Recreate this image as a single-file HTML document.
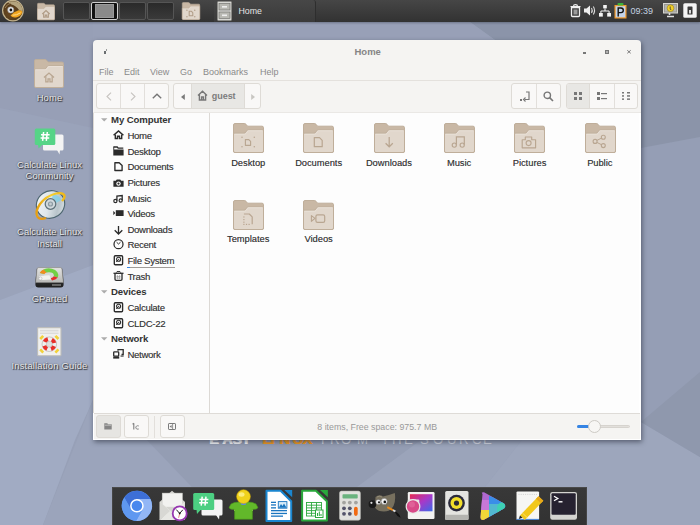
<!DOCTYPE html><html><head><meta charset="utf-8"><style>
*{margin:0;padding:0;box-sizing:border-box}
html,body{width:700px;height:525px;overflow:hidden}
body{position:relative;font-family:"Liberation Sans",sans-serif;background:#98a1b7}
.a{position:absolute}
svg{position:absolute;overflow:visible}
.t{position:absolute;white-space:nowrap;line-height:1}
.dl{position:absolute;width:100px;text-align:center;font-size:9.4px;line-height:11.5px;color:#ececec;text-shadow:1px 1px 1px rgba(0,0,0,.75),0 0 1.5px rgba(0,0,0,.6)}
.ws{position:absolute;top:2px;width:27px;height:18px;border:1px solid #555;border-radius:2px;background:linear-gradient(#2a2a2a,#3a3a3a)}
.sb{position:absolute;left:127px;font-size:9px;color:#4a4a4a;white-space:nowrap;line-height:1}
.sh{position:absolute;left:111px;font-size:9.6px;font-weight:bold;color:#3a3a3a;white-space:nowrap;line-height:1}
.lb{position:absolute;width:80px;text-align:center;font-size:9.2px;color:#3a3a3a;line-height:1;letter-spacing:.05px;text-shadow:.25px 0 0 rgba(58,58,58,.6)}
.tb{position:absolute;border:1px solid #dedbd6;border-radius:3px;background:#f9f8f7}
</style></head><body>
<svg style="left:0;top:0" width="700" height="525">
<rect width="700" height="525" fill="#97a0b7"/>
<polygon points="0,22 93,22 93,128 0,108" fill="#979fb6"/>
<polygon points="0,108 93,128 93,265 0,300" fill="#9aa3ba"/>
<polygon points="0,300 93,265 93,400 75,440 43,525 0,525" fill="#a1abc3"/>
<polygon points="93,400 147,440 192,487 112,487 112,525 43,525" fill="#9ba4bb"/>
<polygon points="147,440 421,440 357,487 192,487" fill="#949db3"/>
<polygon points="421,440 522,440 485,487 357,487" fill="#9ba4ba"/>
<polygon points="522,440 641,440 641,422 700,457 700,525 587,525 587,487 485,487" fill="#9da6bc"/>
<polygon points="641,148 700,137 700,457 641,422" fill="#959eb5"/>
<polygon points="641,422 700,372 700,457" fill="#8f98ad"/>
<polygon points="470,22 700,22 700,137 641,148 641,40 495,40" fill="#8b94a9"/>
<polygon points="93,22 470,22 495,40 93,40" fill="#98a0b7"/>
</svg>
<div class="t" style="left:209.3px;top:434px;font-size:12px;font-weight:bold;color:#f6f7f9;text-shadow:.6px 0 0 #f6f7f9;transform:scaleX(1.2);transform-origin:0 0">E</div>
<div class="t" style="left:222px;top:434px;font-size:12px;font-weight:bold;color:#f6f7f9;text-shadow:.6px 0 0 #f6f7f9;transform:scaleX(1.2);transform-origin:0 0">A</div>
<div class="t" style="left:232.4px;top:434px;font-size:12px;font-weight:bold;color:#f6f7f9;text-shadow:.6px 0 0 #f6f7f9;transform:scaleX(1.2);transform-origin:0 0">S</div>
<div class="t" style="left:240.5px;top:434px;font-size:12px;font-weight:bold;color:#f6f7f9;text-shadow:.6px 0 0 #f6f7f9;transform:scaleX(1.2);transform-origin:0 0">Y</div>
<div class="t" style="left:261.6px;top:434px;font-size:12px;font-weight:bold;color:#f39a1e;text-shadow:.6px 0 0 #f39a1e;transform:scaleX(1.25);transform-origin:0 0">L</div>
<div class="t" style="left:270px;top:434px;font-size:12px;font-weight:bold;color:#f39a1e;text-shadow:.6px 0 0 #f39a1e;transform:scaleX(1.25);transform-origin:0 0">I</div>
<div class="t" style="left:279px;top:434px;font-size:12px;font-weight:bold;color:#f39a1e;text-shadow:.6px 0 0 #f39a1e;transform:scaleX(1.25);transform-origin:0 0">N</div>
<div class="t" style="left:292px;top:434px;font-size:12px;font-weight:bold;color:#f39a1e;text-shadow:.6px 0 0 #f39a1e;transform:scaleX(1.25);transform-origin:0 0">U</div>
<div class="t" style="left:302px;top:434px;font-size:12px;font-weight:bold;color:#f39a1e;text-shadow:.6px 0 0 #f39a1e;transform:scaleX(1.25);transform-origin:0 0">X</div>
<div class="t" style="left:320.7px;top:434px;font-size:12px;color:#dfe2ea;opacity:.85;transform:scaleX(1.1);transform-origin:0 0">F</div>
<div class="t" style="left:330.4px;top:434px;font-size:12px;color:#dfe2ea;opacity:.85;transform:scaleX(1.1);transform-origin:0 0">R</div>
<div class="t" style="left:340.7px;top:434px;font-size:12px;color:#dfe2ea;opacity:.85;transform:scaleX(1.1);transform-origin:0 0">O</div>
<div class="t" style="left:357.4px;top:434px;font-size:12px;color:#dfe2ea;opacity:.85;transform:scaleX(1.1);transform-origin:0 0">M</div>
<div class="t" style="left:380.5px;top:434px;font-size:12px;color:#dfe2ea;opacity:.85;transform:scaleX(1.1);transform-origin:0 0">T</div>
<div class="t" style="left:392px;top:434px;font-size:12px;color:#dfe2ea;opacity:.85;transform:scaleX(1.1);transform-origin:0 0">H</div>
<div class="t" style="left:403.7px;top:434px;font-size:12px;color:#dfe2ea;opacity:.85;transform:scaleX(1.1);transform-origin:0 0">E</div>
<div class="t" style="left:420.4px;top:434px;font-size:12px;color:#dfe2ea;opacity:.85;transform:scaleX(1.1);transform-origin:0 0">S</div>
<div class="t" style="left:433px;top:434px;font-size:12px;color:#dfe2ea;opacity:.85;transform:scaleX(1.1);transform-origin:0 0">O</div>
<div class="t" style="left:447.4px;top:434px;font-size:12px;color:#dfe2ea;opacity:.85;transform:scaleX(1.1);transform-origin:0 0">U</div>
<div class="t" style="left:459px;top:434px;font-size:12px;color:#dfe2ea;opacity:.85;transform:scaleX(1.1);transform-origin:0 0">R</div>
<div class="t" style="left:471.8px;top:434px;font-size:12px;color:#dfe2ea;opacity:.85;transform:scaleX(1.1);transform-origin:0 0">C</div>
<div class="t" style="left:483.4px;top:434px;font-size:12px;color:#dfe2ea;opacity:.85;transform:scaleX(1.1);transform-origin:0 0">E</div>
<div class="a" style="left:0;top:0;width:700px;height:22px;background:linear-gradient(#464646,#323232);box-shadow:0 1px 2px rgba(30,35,50,.35)"></div>
<svg style="left:2px;top:0" width="22" height="22" viewBox="0 0 22 22">
<defs><radialGradient id="lg1" cx=".35" cy=".6" r=".7"><stop offset="0" stop-color="#6a4a22"/><stop offset="1" stop-color="#4a3418"/></radialGradient></defs>
<circle cx="10.9" cy="10.6" r="10.9" fill="#c4b48e"/>
<circle cx="10.9" cy="10.6" r="9.7" fill="url(#lg1)"/>
<path d="M6 2.2 Q12 0 17 3 Q20.5 6 20.6 11.5 L17 10 Q14 5.5 9.5 4.5Z" fill="#b4a47e"/>
<path d="M3 8 Q5 4 9 3" stroke="#9a8058" stroke-width="1" fill="none"/>
<path d="M8.5 15.5 Q12 11.5 16.5 10.3 Q19.8 9.8 20.3 11.8 Q20 15.5 15 17.2 Q10.5 18.3 8.5 15.5Z" fill="#f2a41c"/>
<path d="M10.5 15.2 Q14.5 15.5 18.5 12.8" stroke="#ffe4a0" stroke-width=".9" fill="none"/>
<circle cx="8.7" cy="9.9" r="3.1" fill="#f2f2f2" stroke="#8a8a8a" stroke-width=".6"/>
<circle cx="8.9" cy="10" r="1.4" fill="#111"/>
</svg>
<svg style="left:37px;top:3px" width="18" height="17" viewBox="0 0 31 30">
<path d="M.5 2 Q.5 .5 2 .5 L11.2 .5 Q12.3 .5 13 1.3 L14.6 3.2 L29 3.2 Q30.5 3.2 30.5 4.7 L30.5 28 Q30.5 29.5 29 29.5 L2 29.5 Q.5 29.5 .5 28Z" fill="#c9b8a5" stroke="#bfae9a" stroke-width="1"/>
<path d="M.5 10.2 L11.2 10.2 Q12.1 10.2 12.7 9.3 L13.8 7.6 Q14.3 6.8 15.2 6.8 L30.5 6.8 L30.5 28 Q30.5 29.5 29 29.5 L2 29.5 Q.5 29.5 .5 28Z" fill="#e1d7cc" stroke="#bfae9a" stroke-width="1"/>
<path d="M1.5 11.2 L11.4 11.2 Q12.6 11.2 13.3 10.2 L14.4 8.5 Q14.8 7.8 15.6 7.8 L29.5 7.8" stroke="#ebe3da" stroke-width=".8" fill="none"/>
<path d="M9 19.5 L15.5 13.5 L22 19.5" stroke="#b09c86" stroke-width="2.2" fill="none"/><path d="M11.3 18 V25 H14.2 V21.5 H16.8 V25 H19.7 V18" stroke="#b09c86" stroke-width="2" fill="none"/>
</svg>
<div class="ws" style="left:63px"></div>
<div class="ws" style="left:91px;border:1px solid #cfcfcf;background:#111"><div class="a" style="left:3px;top:1px;width:19px;height:14px;background:#8a8a8a;border:1px solid #9a9a9a"></div></div>
<div class="ws" style="left:119px"></div>
<div class="ws" style="left:147px"></div>
<svg style="left:182px;top:2px" width="18" height="18" viewBox="0 0 31 30">
<path d="M.5 2 Q.5 .5 2 .5 L11.2 .5 Q12.3 .5 13 1.3 L14.6 3.2 L29 3.2 Q30.5 3.2 30.5 4.7 L30.5 28 Q30.5 29.5 29 29.5 L2 29.5 Q.5 29.5 .5 28Z" fill="#c9b8a5" stroke="#bfae9a" stroke-width="1"/>
<path d="M.5 10.2 L11.2 10.2 Q12.1 10.2 12.7 9.3 L13.8 7.6 Q14.3 6.8 15.2 6.8 L30.5 6.8 L30.5 28 Q30.5 29.5 29 29.5 L2 29.5 Q.5 29.5 .5 28Z" fill="#e1d7cc" stroke="#bfae9a" stroke-width="1"/>
<path d="M1.5 11.2 L11.4 11.2 Q12.6 11.2 13.3 10.2 L14.4 8.5 Q14.8 7.8 15.6 7.8 L29.5 7.8" stroke="#ebe3da" stroke-width=".8" fill="none"/>
<path d="M12.4 15.6 H16.2 L18.6 18 V23.3 H12.4Z" stroke="#b09c86" stroke-width="1.8" fill="none"/><g fill="#b09c86"><circle cx="8.5" cy="13.8" r="1.2"/><circle cx="22" cy="13.8" r="1.2"/><circle cx="8.5" cy="25" r="1.2"/><circle cx="22" cy="25" r="1.2"/></g>
</svg>
<div class="a" style="left:214px;top:0;width:102px;height:22px;background:linear-gradient(#474747,#3a3a3a);border-radius:0 3px 0 0;border-right:1px solid #2e2e2e"></div>
<svg style="left:217px;top:1px" width="15" height="20" viewBox="0 0 15 20">
<rect x=".5" y=".5" width="14" height="19" rx="1" fill="#d8d8d4" stroke="#8c8c88"/>
<rect x="2" y="2.5" width="11" height="6.5" fill="#b8b8b2" stroke="#6a6a66" stroke-width=".6"/>
<rect x="2" y="11" width="11" height="6.5" fill="#b8b8b2" stroke="#6a6a66" stroke-width=".6"/>
<rect x="5" y="5" width="5" height="1.6" fill="#eee"/><rect x="5" y="13.5" width="5" height="1.6" fill="#eee"/>
</svg>
<div class="t" style="left:238.5px;top:7px;font-size:8.8px;color:#e4e4e4;">Home</div>
<svg style="left:570px;top:4px" width="11" height="13" viewBox="0 0 11 13">
<path d="M1.5 3.5 H9.5 V11.5 Q9.5 12.5 8.5 12.5 H2.5 Q1.5 12.5 1.5 11.5Z" fill="none" stroke="#f0f0f0" stroke-width="1.3"/>
<rect x="3.5" y="5.5" width="4" height="5" fill="#9a9a9a"/>
<path d="M.5 2.5 H10.5 M3.5 2.3 Q3.5 .7 5.5 .7 Q7.5 .7 7.5 2.3" stroke="#f0f0f0" stroke-width="1.2" fill="none"/>
</svg>
<svg style="left:584px;top:5px" width="12" height="11" viewBox="0 0 12 11">
<path d="M0 3.5 H2.5 L6 .5 V10.5 L2.5 7.5 H0Z" fill="#eee"/>
<path d="M7.5 3 Q9 5.5 7.5 8 M9.3 1.5 Q11.8 5.5 9.3 9.5" stroke="#ddd" stroke-width="1.1" fill="none"/>
</svg>
<svg style="left:599px;top:5px" width="12" height="12" viewBox="0 0 12 12">
<rect x="4.2" y="0" width="3.6" height="3.4" fill="#f4f4f4"/>
<rect x="0" y="8" width="3.8" height="3.6" fill="#f4f4f4"/><rect x="8.2" y="8" width="3.8" height="3.6" fill="#f4f4f4"/>
<path d="M6 3.4 V6 M1.9 8 V6 H10.1 V8" stroke="#f4f4f4" stroke-width="1" fill="none"/>
</svg>
<svg style="left:614px;top:3px" width="13" height="16" viewBox="0 0 13 16">
<rect x=".5" y="2" width="12" height="13.5" fill="#f39a2b"/>
<rect x="1.7" y="3.2" width="9.6" height="11.1" fill="#c4d4ea"/>
<rect x="3.5" y="0" width="6" height="2.6" rx="1" fill="#3cb43c"/>
<path d="M4.2 13.5 V5 H7 Q9.3 5 9.3 7.3 Q9.3 9.6 7 9.6 H4.2" stroke="#111" stroke-width="1.4" fill="none"/>
</svg>
<div class="t" style="left:630.5px;top:7px;font-size:9px;color:#c4d2e0;">09:39</div>
<svg style="left:663px;top:3px" width="15" height="15" viewBox="0 0 15 15">
<rect x=".5" y=".5" width="14" height="9.5" fill="#9a9a96" stroke="#d6d6d0"/>
<rect x="2" y="2" width="11" height="6.5" fill="#b5b5b0"/>
<circle cx="7.5" cy="5.2" r="3.4" fill="#f2d02a" stroke="#6a5a00" stroke-width=".4"/>
<path d="M7.2 3.5 V6 L8.2 7" stroke="#333" stroke-width=".8" fill="none"/>
<path d="M6.5 10 V12 M4 13.5 H11" stroke="#e0e0e0" stroke-width="1.6"/>
</svg>
<svg style="left:683px;top:3px" width="14" height="15" viewBox="0 0 14 15">
<rect x=".3" y=".3" width="13.4" height="14.4" rx="1.5" fill="#f4f4f4"/>
<rect x="4.5" y="3.5" width="5" height="8" rx=".6" fill="#3a3a3a"/>
<rect x="6" y="7" width="2" height="3.5" fill="#ddd"/>
</svg>
<svg style="left:34px;top:59px" width="30" height="29" viewBox="0 0 31 30">
<path d="M.5 2 Q.5 .5 2 .5 L11.2 .5 Q12.3 .5 13 1.3 L14.6 3.2 L29 3.2 Q30.5 3.2 30.5 4.7 L30.5 28 Q30.5 29.5 29 29.5 L2 29.5 Q.5 29.5 .5 28Z" fill="#c9b8a5" stroke="#bfae9a" stroke-width="1"/>
<path d="M.5 10.2 L11.2 10.2 Q12.1 10.2 12.7 9.3 L13.8 7.6 Q14.3 6.8 15.2 6.8 L30.5 6.8 L30.5 28 Q30.5 29.5 29 29.5 L2 29.5 Q.5 29.5 .5 28Z" fill="#e1d7cc" stroke="#bfae9a" stroke-width="1"/>
<path d="M1.5 11.2 L11.4 11.2 Q12.6 11.2 13.3 10.2 L14.4 8.5 Q14.8 7.8 15.6 7.8 L29.5 7.8" stroke="#ebe3da" stroke-width=".8" fill="none"/>
<path d="M10.3 19.2 L15.5 14.6 L20.7 19.2" stroke="#b9a691" stroke-width="1.4" fill="none"/><path d="M12.2 17.8 V23.6 H14.5 V20.6 H16.5 V23.6 H18.8 V17.8" stroke="#b9a691" stroke-width="1.3" fill="none"/>
</svg>
<div class="dl" style="left:-0.5px;top:91.7px;letter-spacing:0.15px">Home</div>
<svg style="left:34px;top:128px" width="30" height="28" viewBox="0 0 30 28">
<rect x="9" y="6.5" width="20.5" height="16" rx="1.5" fill="#f4f4f4"/>
<path d="M23 22 L25.5 26.5 L26 22Z" fill="#f4f4f4"/>
<rect x=".8" y=".4" width="20.5" height="16.5" rx="1.5" fill="#56d487"/>
<path d="M4 16.5 L4.6 20.6 L8.5 16.5Z" fill="#56d487"/>
<path d="M9.6 4 L8.6 12.8 M13.3 4 L12.3 12.8 M7 6.8 H15.6 M6.6 10 H15.2" stroke="#fff" stroke-width="1.5"/>
</svg>
<div class="dl" style="left:-0.5px;top:158.7px;letter-spacing:0.05px">Calculate Linux<br>Community</div>
<svg style="left:34px;top:190px" width="32" height="32" viewBox="0 0 32 32">
<defs><linearGradient id="cdg" x1="0" y1="0" x2="1" y2="1"><stop offset="0" stop-color="#f6f8fa"/><stop offset=".45" stop-color="#dfe6ea"/><stop offset=".7" stop-color="#b8c4ca"/><stop offset="1" stop-color="#eef2f4"/></linearGradient>
<linearGradient id="cdb" x1="0" y1="0" x2="1" y2="0"><stop offset="0" stop-color="#e8a010"/><stop offset=".5" stop-color="#f6d030"/><stop offset="1" stop-color="#f0b818"/></linearGradient></defs>
<ellipse cx="16.5" cy="14.5" rx="14.5" ry="13.5" transform="rotate(-35 16.5 14.5)" fill="url(#cdg)" stroke="#4d6670" stroke-width="1.1"/>
<path d="M19 4 Q25 5 27.5 10 L22 13 Q21 9 18 8Z" fill="#7ed0e8" opacity=".75"/>
<circle cx="16.5" cy="14" r="5.3" fill="#d0d8dc" stroke="#5d7078" stroke-width="1.2"/>
<circle cx="16.5" cy="14" r="2.6" fill="#8a9aa2"/><circle cx="16.5" cy="14" r="1.4" fill="#c4ccd0"/>
<path d="M3.5 27 Q.5 22 6 14 Q12 6 22 3.5 Q29 2 30.5 5.5 Q31 8 28 11" stroke="url(#cdb)" stroke-width="2.3" fill="none"/>
<path d="M3.5 27 Q6 30 12 28" stroke="#e89a10" stroke-width="2.3" fill="none"/>
</svg>
<div class="dl" style="left:-0.5px;top:226.2px;letter-spacing:0.05px">Calculate Linux<br>Install</div>
<svg style="left:35px;top:267px" width="29" height="21" viewBox="0 0 29 21">
<defs><linearGradient id="gpb" x1="0" y1="0" x2="0" y2="1"><stop offset="0" stop-color="#4a4a4a"/><stop offset="1" stop-color="#1e1e1e"/></linearGradient>
<linearGradient id="gpt" x1="0" y1="0" x2="0" y2="1"><stop offset="0" stop-color="#e4e4e2"/><stop offset="1" stop-color="#b8b8b6"/></linearGradient></defs>
<path d="M3.5 .5 H25.5 Q27 .5 27.3 2 L28.6 14 V17.5 Q28.6 20.5 25.6 20.5 H3.4 Q.4 20.5 .4 17.5 V14 L1.7 2 Q2 .5 3.5 .5Z" fill="url(#gpb)"/>
<path d="M3.7 .6 H25.3 Q26.6 .6 26.9 1.9 L28.3 15.5 H.7 L2.1 1.9 Q2.4 .6 3.7 .6Z" fill="url(#gpt)" stroke="#8a8a88" stroke-width=".5"/>
<path d="M14 8 L4.8 6 A9.5 7 0 0 1 22.8 10.6Z" fill="#72d046"/>
<path d="M14 8 L4.8 6 A9.5 7 0 0 1 8.5 2.6Z" fill="#f28a1e"/>
<path d="M14 8 L22.8 10.6 A9.5 7 0 0 1 17 13.6Z" fill="#e42e2e"/>
<ellipse cx="14" cy="8.3" rx="4.8" ry="3" fill="#d8d8d6"/>
<path d="M4 9 L14.5 8.2 L16 12.5 L6.5 13Z" fill="#f2f2f0"/>
<circle cx="5.4" cy="11.5" r="1.6" fill="#f8f8f8" stroke="#999" stroke-width=".4"/>
<rect x="17" y="17.2" width="9" height="1.6" fill="#777"/>
</svg>
<div class="dl" style="left:-0.5px;top:293.2px;letter-spacing:0.1px">GParted</div>
<svg style="left:37px;top:327px" width="25" height="30" viewBox="0 0 25 30">
<rect x=".6" y=".6" width="23.4" height="28.2" rx="1" fill="#f0f0ee" stroke="#bdbdbb" stroke-width="1.1"/>
<rect x="3" y="2.8" width="18.5" height="1.6" fill="#dcdcda"/><rect x="3" y="5.6" width="18.5" height="1.4" fill="#dcdcda"/>
<circle cx="12.3" cy="17.2" r="7.3" fill="#f0f0ee" stroke="#a0a09e" stroke-width=".5"/>
<circle cx="12.3" cy="17.2" r="5.1" fill="none" stroke="#e8302a" stroke-width="4.2" stroke-dasharray="4.0 4.0" stroke-dashoffset="6"/>
<circle cx="12.3" cy="17.2" r="3" fill="#e0e0de" stroke="#b0b0ae" stroke-width=".5"/>
<path d="M3.2 12 L6.2 8.8 M21.4 12 L18.4 8.8 M3.2 22.4 L6.2 25.6 M21.4 22.4 L18.4 25.6" stroke="#f2d23a" stroke-width="2.6"/>
</svg>
<div class="dl" style="left:-0.5px;top:360.2px;letter-spacing:0.2px">Installation Guide</div>
<div class="a" style="left:93px;top:40px;width:548px;height:400px;background:#f5f4f2;border-radius:4px 4px 0 0;box-shadow:1px 2px 5px rgba(40,45,60,.6)"></div>
<div class="t" style="left:354.5px;top:47px;font-size:9.5px;color:#858585;font-weight:bold;">Home</div>
<div class="a" style="left:104px;top:51px;width:2px;height:3px;background:#6a6e70"></div><div class="a" style="left:106px;top:49px;width:1px;height:2px;background:#9a9c9c"></div>
<div class="a" style="left:583px;top:52px;width:2.5px;height:2px;background:#777"></div>
<div class="a" style="left:605px;top:50.4px;width:3.5px;height:3.5px;border:1px solid #777;background:#b0b0b0"></div>
<svg style="left:627.3px;top:50.4px" width="4" height="3.6" viewBox="0 0 4 3.6"><path d="M.3 .3 L3.7 3.3 M3.7 .3 L.3 3.3" stroke="#777" stroke-width="1"/></svg>
<div class="t" style="left:99px;top:68px;font-size:9px;color:#8a8a8a">File</div>
<div class="t" style="left:124px;top:68px;font-size:9px;color:#8a8a8a">Edit</div>
<div class="t" style="left:150px;top:68px;font-size:9px;color:#8a8a8a">View</div>
<div class="t" style="left:180px;top:68px;font-size:9px;color:#8a8a8a">Go</div>
<div class="t" style="left:203px;top:68px;font-size:9px;color:#8a8a8a">Bookmarks</div>
<div class="t" style="left:260px;top:68px;font-size:9px;color:#8a8a8a">Help</div>
<div class="a" style="left:93px;top:80px;width:548px;height:1px;background:#e4e1dd"></div>
<div class="tb" style="left:96px;top:83px;width:73px;height:26px"></div>
<div class="a" style="left:120px;top:84px;width:1px;height:24px;background:#e2dfdb"></div>
<div class="a" style="left:144px;top:84px;width:1px;height:24px;background:#e2dfdb"></div>
<svg style="left:105.5px;top:92px" width="6" height="9" viewBox="0 0 6 9"><path d="M5 .6 L1 4.5 L5 8.4" stroke="#c6c3bf" stroke-width="1.1" fill="none"/></svg>
<svg style="left:130px;top:92px" width="6" height="9" viewBox="0 0 6 9"><path d="M1 .6 L5 4.5 L1 8.4" stroke="#c6c3bf" stroke-width="1.1" fill="none"/></svg>
<svg style="left:151.5px;top:93px" width="10" height="6" viewBox="0 0 10 6"><path d="M.8 5.2 L5 1.2 L9.2 5.2" stroke="#767676" stroke-width="1.4" fill="none"/></svg>
<div class="tb" style="left:173px;top:83px;width:88px;height:26px"></div>
<div class="a" style="left:191px;top:84px;width:54px;height:24px;background:#e8e7e4;border-left:1px solid #dedbd6;border-right:1px solid #dedbd6"></div>
<svg style="left:180.5px;top:93.5px" width="4" height="6" viewBox="0 0 4 6"><path d="M3.8 0 L0 3 L3.8 6Z" fill="#7a7a7a"/></svg>
<svg style="left:250.5px;top:93.5px" width="4" height="6" viewBox="0 0 4 6"><path d="M.2 0 L4 3 L.2 6Z" fill="#c8c6c2"/></svg>
<svg style="left:197px;top:90px" width="11" height="11" viewBox="0 0 11 11"><path d="M1 5.5 L5.5 1.2 L10 5.5 M2.4 4.4 V10 H8.6 V4.4 M4.6 10 V7 H6.4 V10" stroke="#777" stroke-width="1.4" fill="none"/></svg>
<div class="t" style="left:211.8px;top:92px;font-size:9px;color:#7c7c7c;font-weight:bold;letter-spacing:-.05px">guest</div>
<div class="tb" style="left:511px;top:83px;width:50px;height:26px"></div>
<div class="a" style="left:536px;top:84px;width:1px;height:24px;background:#e2dfdb"></div>
<svg style="left:520px;top:91px" width="11" height="11" viewBox="0 0 11 11"><path d="M6 1 H9 V8.5 H4.5" stroke="#777" stroke-width="1.2" fill="none"/><path d="M5.5 6.5 L3.5 8.5 L5.5 10.5" stroke="#777" stroke-width="1.1" fill="none"/><rect x="0" y="8" width="2" height="2" fill="#777"/></svg>
<svg style="left:543px;top:91px" width="11" height="11" viewBox="0 0 11 11"><circle cx="4.3" cy="4.3" r="3.2" stroke="#777" stroke-width="1.4" fill="none"/><path d="M6.6 6.6 L10 10" stroke="#777" stroke-width="1.6"/></svg>
<div class="tb" style="left:566px;top:83px;width:72px;height:26px"></div>
<div class="a" style="left:567px;top:84px;width:23px;height:24px;background:#e8e7e4;border-right:1px solid #dedbd6;border-radius:2px 0 0 2px"></div>
<div class="a" style="left:614px;top:84px;width:1px;height:24px;background:#e2dfdb"></div>
<svg style="left:574px;top:92px" width="8" height="8" viewBox="0 0 8 8"><g fill="#777"><rect x="0" y="0" width="3" height="3"/><rect x="5" y="0" width="3" height="3"/><rect x="0" y="5" width="3" height="3"/><rect x="5" y="5" width="3" height="3"/></g></svg>
<svg style="left:597px;top:92px" width="10" height="8" viewBox="0 0 10 8"><g fill="#777"><rect x="0" y="0" width="3" height="3"/><rect x="4" y="1" width="6" height="1.2"/><rect x="0" y="5" width="3" height="3"/><rect x="4" y="6" width="6" height="1.2"/></g></svg>
<svg style="left:622px;top:92px" width="8" height="8" viewBox="0 0 8 8"><g fill="#777"><rect x="0" y="0" width="2" height="1.5"/><rect x="5" y="0" width="3" height="1.5"/><rect x="0" y="3.2" width="2" height="1.5"/><rect x="5" y="3.2" width="3" height="1.5"/><rect x="0" y="6.4" width="2" height="1.5"/><rect x="5" y="6.4" width="3" height="1.5"/></g></svg>
<div class="a" style="left:93px;top:112px;width:548px;height:1px;background:#eae8e5"></div>
<div class="a" style="left:94px;top:113px;width:115px;height:300px;background:#fcfcfc"></div>
<div class="a" style="left:209px;top:113px;width:1px;height:300px;background:#dcd9d5"></div>
<div class="a" style="left:210px;top:113px;width:430px;height:300px;background:#fdfdfd"></div>
<div class="a" style="left:93px;top:113px;width:1px;height:300px;background:#dcd9d4"></div>
<div class="a" style="left:639px;top:113px;width:2px;height:300px;background:#fff"></div>
<div class="t" style="left:111px;top:115px;font-size:9.6px;color:#333;font-weight:bold;letter-spacing:-.1px">My Computer</div>
<svg style="left:101px;top:117.5px" width="7" height="4" viewBox="0 0 7 4"><path d="M0 .2 H6.4 L3.2 3.6Z" fill="#acacac"/></svg>
<div class="t" style="left:127.4px;top:131px;font-size:9.5px;color:#3a3a3a;letter-spacing:-.25px;text-shadow:.25px 0 0 rgba(58,58,58,.5)">Home</div>
<svg style="left:113px;top:130.0px" width="11" height="11" viewBox="0 0 11 11"><path d="M.6 5.3 L5.5 .9 L10.4 5.3" stroke="#2b2b2b" stroke-width="1.5" fill="none"/><path d="M2.3 4.6 V8.5 H4.5 V6.3 H6.5 V8.5 H8.7 V4.6" stroke="#2b2b2b" stroke-width="1.4" fill="none"/></svg>
<div class="t" style="left:127.4px;top:147px;font-size:9.5px;color:#3a3a3a;letter-spacing:-.25px;text-shadow:.25px 0 0 rgba(58,58,58,.5)">Desktop</div>
<svg style="left:113px;top:146.0px" width="11" height="11" viewBox="0 0 11 11"><path d="M.7 1 H4.2 L5.2 2.2 H10.3" stroke="#2b2b2b" stroke-width="1.3" fill="none"/><path d="M.3 .6 H1.2 V3.4 H10.6 V9.4 H.3Z" fill="#2b2b2b"/></svg>
<div class="t" style="left:127.4px;top:162px;font-size:9.5px;color:#3a3a3a;letter-spacing:-.25px;text-shadow:.25px 0 0 rgba(58,58,58,.5)">Documents</div>
<svg style="left:113px;top:161.5px" width="11" height="11" viewBox="0 0 11 11"><path d="M1.9 .7 H6.2 L9.1 3.6 V8.5 H1.9Z" stroke="#2b2b2b" stroke-width="1.35" fill="none" stroke-linejoin="round"/></svg>
<div class="t" style="left:127.4px;top:178px;font-size:9.5px;color:#3a3a3a;letter-spacing:-.25px;text-shadow:.25px 0 0 rgba(58,58,58,.5)">Pictures</div>
<svg style="left:113px;top:179.0px" width="11" height="11" viewBox="0 0 11 11"><path d="M.4 1.8 H2.8 L3.8 .4 H7.2 L8.2 1.8 H10.6 V7.7 H.4Z" fill="#2b2b2b"/><circle cx="5.5" cy="4.6" r="2.2" fill="#fcfcfc"/><circle cx="5.5" cy="4.6" r="1.1" fill="#2b2b2b"/></svg>
<div class="t" style="left:127.4px;top:194px;font-size:9.5px;color:#3a3a3a;letter-spacing:-.25px;text-shadow:.25px 0 0 rgba(58,58,58,.5)">Music</div>
<svg style="left:113px;top:194.5px" width="11" height="11" viewBox="0 0 11 11"><path d="M3.9 5.8 V1.2 L9.2 .6 V5.3" stroke="#2b2b2b" stroke-width="1.3" fill="none"/><circle cx="2.4" cy="6" r="1.6" stroke="#2b2b2b" stroke-width="1.2" fill="none"/><circle cx="7.7" cy="5.5" r="1.6" stroke="#2b2b2b" stroke-width="1.2" fill="none"/></svg>
<div class="t" style="left:127.4px;top:209px;font-size:9.5px;color:#3a3a3a;letter-spacing:-.25px;text-shadow:.25px 0 0 rgba(58,58,58,.5)">Videos</div>
<svg style="left:113px;top:210.0px" width="11" height="11" viewBox="0 0 11 11"><path d="M.3 .8 V5.2 L2.3 3Z" fill="#2b2b2b"/><rect x="2.8" y=".2" width="7.8" height="5.8" fill="#2b2b2b"/></svg>
<div class="t" style="left:127.4px;top:225px;font-size:9.5px;color:#3a3a3a;letter-spacing:-.25px;text-shadow:.25px 0 0 rgba(58,58,58,.5)">Downloads</div>
<svg style="left:113px;top:225.5px" width="11" height="11" viewBox="0 0 11 11"><path d="M5.5 0 V7.8 M1.7 4.2 L5.5 8 L9.3 4.2" stroke="#2b2b2b" stroke-width="1.3" fill="none"/></svg>
<div class="t" style="left:127.4px;top:240px;font-size:9.5px;color:#3a3a3a;letter-spacing:-.25px;text-shadow:.25px 0 0 rgba(58,58,58,.5)">Recent</div>
<svg style="left:113px;top:238.7px" width="11" height="11" viewBox="0 0 11 11"><circle cx="5.5" cy="5.2" r="4.5" stroke="#2b2b2b" stroke-width="1.25" fill="none"/><path d="M3.6 3.2 L5.5 5 L7.5 3.2" stroke="#2b2b2b" stroke-width="1" fill="none"/></svg>
<div class="t" style="left:127.4px;top:256px;font-size:9.5px;color:#3a3a3a;letter-spacing:-.25px;text-shadow:.25px 0 0 rgba(58,58,58,.5)">File System</div>
<svg style="left:113px;top:255.3px" width="11" height="11" viewBox="0 0 11 11"><rect x="1.3" y=".7" width="8.3" height="9" rx="1" stroke="#2b2b2b" stroke-width="1.35" fill="none"/><circle cx="5.6" cy="4.3" r="2" stroke="#2b2b2b" stroke-width="1.1" fill="none"/><circle cx="5.6" cy="4.3" r=".6" fill="#2b2b2b"/><path d="M3.2 6.8 L5 5" stroke="#2b2b2b" stroke-width="1"/></svg>
<div class="t" style="left:127.4px;top:272px;font-size:9.5px;color:#3a3a3a;letter-spacing:-.25px;text-shadow:.25px 0 0 rgba(58,58,58,.5)">Trash</div>
<svg style="left:113px;top:270.8px" width="11" height="11" viewBox="0 0 11 11"><path d="M2 2.8 V8.2 Q2 9.3 3.1 9.3 H7.9 Q9 9.3 9 8.2 V2.8" stroke="#2b2b2b" stroke-width="1.3" fill="none"/><path d="M.5 2.3 H10.5" stroke="#2b2b2b" stroke-width="1.3"/><path d="M3.3 1.6 L4 .6 H7 L7.7 1.6" stroke="#2b2b2b" stroke-width="1" fill="none"/><path d="M4.4 4 V8 M6.6 4 V8 M3.5 5.5 H7.5 M3.5 7 H7.5" stroke="#9a9a9a" stroke-width=".7"/></svg>
<div class="t" style="left:111px;top:287px;font-size:9.6px;color:#333;font-weight:bold;letter-spacing:-.1px">Devices</div>
<svg style="left:101px;top:289.5px" width="7" height="4" viewBox="0 0 7 4"><path d="M0 .2 H6.4 L3.2 3.6Z" fill="#acacac"/></svg>
<div class="t" style="left:127.4px;top:303px;font-size:9.5px;color:#3a3a3a;letter-spacing:-.25px;text-shadow:.25px 0 0 rgba(58,58,58,.5)">Calculate</div>
<svg style="left:113px;top:302.3px" width="11" height="11" viewBox="0 0 11 11"><rect x="1.3" y=".7" width="8.3" height="9" rx="1" stroke="#2b2b2b" stroke-width="1.35" fill="none"/><circle cx="5.6" cy="4.3" r="2" stroke="#2b2b2b" stroke-width="1.1" fill="none"/><circle cx="5.6" cy="4.3" r=".6" fill="#2b2b2b"/><path d="M3.2 6.8 L5 5" stroke="#2b2b2b" stroke-width="1"/></svg>
<div class="t" style="left:127.4px;top:319px;font-size:9.5px;color:#3a3a3a;letter-spacing:-.25px;text-shadow:.25px 0 0 rgba(58,58,58,.5)">CLDC-22</div>
<svg style="left:113px;top:318.3px" width="11" height="11" viewBox="0 0 11 11"><rect x="1.3" y=".7" width="8.3" height="9" rx="1" stroke="#2b2b2b" stroke-width="1.35" fill="none"/><circle cx="5.6" cy="4.3" r="2" stroke="#2b2b2b" stroke-width="1.1" fill="none"/><circle cx="5.6" cy="4.3" r=".6" fill="#2b2b2b"/><path d="M3.2 6.8 L5 5" stroke="#2b2b2b" stroke-width="1"/></svg>
<div class="t" style="left:111px;top:334px;font-size:9.6px;color:#333;font-weight:bold;letter-spacing:-.1px">Network</div>
<svg style="left:101px;top:336.5px" width="7" height="4" viewBox="0 0 7 4"><path d="M0 .2 H6.4 L3.2 3.6Z" fill="#acacac"/></svg>
<div class="t" style="left:127.4px;top:350px;font-size:9.5px;color:#3a3a3a;letter-spacing:-.25px;text-shadow:.25px 0 0 rgba(58,58,58,.5)">Network</div>
<svg style="left:113px;top:349.0px" width="11" height="11" viewBox="0 0 11 11"><path d="M5 1.7 V.7 H10.2 V5.5 H8.5" stroke="#2b2b2b" stroke-width="1.3" fill="none"/><path d="M7.5 6.5 H10.6 V7.6 H7.5Z" fill="#2b2b2b"/><rect x=".7" y="2.9" width="5" height="4.2" rx=".6" stroke="#2b2b2b" stroke-width="1.3" fill="#fcfcfc"/><path d="M.2 7.6 H6.2 V9.6 H.2Z" fill="#2b2b2b"/></svg>
<div class="a" style="left:127px;top:267px;width:48px;height:1px;background:#a09c98"></div>
<div class="a" style="left:127px;top:267px;width:3px;height:1px;background:#3a86e0"></div>
<svg style="left:233.0px;top:123px" width="31" height="30" viewBox="0 0 31 30">
<path d="M.5 2 Q.5 .5 2 .5 L11.2 .5 Q12.3 .5 13 1.3 L14.6 3.2 L29 3.2 Q30.5 3.2 30.5 4.7 L30.5 28 Q30.5 29.5 29 29.5 L2 29.5 Q.5 29.5 .5 28Z" fill="#c9b8a5" stroke="#bfae9a" stroke-width="1"/>
<path d="M.5 10.2 L11.2 10.2 Q12.1 10.2 12.7 9.3 L13.8 7.6 Q14.3 6.8 15.2 6.8 L30.5 6.8 L30.5 28 Q30.5 29.5 29 29.5 L2 29.5 Q.5 29.5 .5 28Z" fill="#e1d7cc" stroke="#bfae9a" stroke-width="1"/>
<path d="M1.5 11.2 L11.4 11.2 Q12.6 11.2 13.3 10.2 L14.4 8.5 Q14.8 7.8 15.6 7.8 L29.5 7.8" stroke="#ebe3da" stroke-width=".8" fill="none"/>
<path d="M12.4 16.6 H15.8 L17.6 18.4 V22.3 H12.4Z" stroke="#b9a691" stroke-width="1.15" fill="none" stroke-linejoin="round"/><g fill="#b9a691"><circle cx="9" cy="14.3" r=".75"/><circle cx="21.3" cy="14.3" r=".75"/><circle cx="9" cy="23.8" r=".75"/><circle cx="21.3" cy="23.8" r=".75"/></g>
</svg>
<div class="lb" style="left:208.2px;top:159px">Desktop</div>
<svg style="left:303.3px;top:123px" width="31" height="30" viewBox="0 0 31 30">
<path d="M.5 2 Q.5 .5 2 .5 L11.2 .5 Q12.3 .5 13 1.3 L14.6 3.2 L29 3.2 Q30.5 3.2 30.5 4.7 L30.5 28 Q30.5 29.5 29 29.5 L2 29.5 Q.5 29.5 .5 28Z" fill="#c9b8a5" stroke="#bfae9a" stroke-width="1"/>
<path d="M.5 10.2 L11.2 10.2 Q12.1 10.2 12.7 9.3 L13.8 7.6 Q14.3 6.8 15.2 6.8 L30.5 6.8 L30.5 28 Q30.5 29.5 29 29.5 L2 29.5 Q.5 29.5 .5 28Z" fill="#e1d7cc" stroke="#bfae9a" stroke-width="1"/>
<path d="M1.5 11.2 L11.4 11.2 Q12.6 11.2 13.3 10.2 L14.4 8.5 Q14.8 7.8 15.6 7.8 L29.5 7.8" stroke="#ebe3da" stroke-width=".8" fill="none"/>
<path d="M11.3 14.6 H16.5 L19.2 17.3 V23.7 H11.3Z" stroke="#b9a691" stroke-width="1.2" fill="none" stroke-linejoin="round"/>
</svg>
<div class="lb" style="left:278.6px;top:159px">Documents</div>
<svg style="left:373.6px;top:123px" width="31" height="30" viewBox="0 0 31 30">
<path d="M.5 2 Q.5 .5 2 .5 L11.2 .5 Q12.3 .5 13 1.3 L14.6 3.2 L29 3.2 Q30.5 3.2 30.5 4.7 L30.5 28 Q30.5 29.5 29 29.5 L2 29.5 Q.5 29.5 .5 28Z" fill="#c9b8a5" stroke="#bfae9a" stroke-width="1"/>
<path d="M.5 10.2 L11.2 10.2 Q12.1 10.2 12.7 9.3 L13.8 7.6 Q14.3 6.8 15.2 6.8 L30.5 6.8 L30.5 28 Q30.5 29.5 29 29.5 L2 29.5 Q.5 29.5 .5 28Z" fill="#e1d7cc" stroke="#bfae9a" stroke-width="1"/>
<path d="M1.5 11.2 L11.4 11.2 Q12.6 11.2 13.3 10.2 L14.4 8.5 Q14.8 7.8 15.6 7.8 L29.5 7.8" stroke="#ebe3da" stroke-width=".8" fill="none"/>
<path d="M15.2 13.9 V23.6 M11.6 20.2 L15.2 23.8 L18.8 20.2" stroke="#b9a691" stroke-width="1.25" fill="none"/>
</svg>
<div class="lb" style="left:348.9px;top:159px">Downloads</div>
<svg style="left:443.9px;top:123px" width="31" height="30" viewBox="0 0 31 30">
<path d="M.5 2 Q.5 .5 2 .5 L11.2 .5 Q12.3 .5 13 1.3 L14.6 3.2 L29 3.2 Q30.5 3.2 30.5 4.7 L30.5 28 Q30.5 29.5 29 29.5 L2 29.5 Q.5 29.5 .5 28Z" fill="#c9b8a5" stroke="#bfae9a" stroke-width="1"/>
<path d="M.5 10.2 L11.2 10.2 Q12.1 10.2 12.7 9.3 L13.8 7.6 Q14.3 6.8 15.2 6.8 L30.5 6.8 L30.5 28 Q30.5 29.5 29 29.5 L2 29.5 Q.5 29.5 .5 28Z" fill="#e1d7cc" stroke="#bfae9a" stroke-width="1"/>
<path d="M1.5 11.2 L11.4 11.2 Q12.6 11.2 13.3 10.2 L14.4 8.5 Q14.8 7.8 15.6 7.8 L29.5 7.8" stroke="#ebe3da" stroke-width=".8" fill="none"/>
<path d="M12.4 21.8 V13.9 H20.3 V21.8" stroke="#b9a691" stroke-width="1.2" fill="none"/><circle cx="10.3" cy="22.1" r="2.1" stroke="#b9a691" stroke-width="1.15" fill="none"/><circle cx="18.2" cy="22.1" r="2.1" stroke="#b9a691" stroke-width="1.15" fill="none"/>
</svg>
<div class="lb" style="left:419.1px;top:159px">Music</div>
<svg style="left:514.2px;top:123px" width="31" height="30" viewBox="0 0 31 30">
<path d="M.5 2 Q.5 .5 2 .5 L11.2 .5 Q12.3 .5 13 1.3 L14.6 3.2 L29 3.2 Q30.5 3.2 30.5 4.7 L30.5 28 Q30.5 29.5 29 29.5 L2 29.5 Q.5 29.5 .5 28Z" fill="#c9b8a5" stroke="#bfae9a" stroke-width="1"/>
<path d="M.5 10.2 L11.2 10.2 Q12.1 10.2 12.7 9.3 L13.8 7.6 Q14.3 6.8 15.2 6.8 L30.5 6.8 L30.5 28 Q30.5 29.5 29 29.5 L2 29.5 Q.5 29.5 .5 28Z" fill="#e1d7cc" stroke="#bfae9a" stroke-width="1"/>
<path d="M1.5 11.2 L11.4 11.2 Q12.6 11.2 13.3 10.2 L14.4 8.5 Q14.8 7.8 15.6 7.8 L29.5 7.8" stroke="#ebe3da" stroke-width=".8" fill="none"/>
<path d="M8.2 16.7 H11.3 V14 H17.7 V16.7 H21.6 V24.8 H8.2Z" stroke="#b9a691" stroke-width="1.15" fill="none" stroke-linejoin="round"/><circle cx="14.6" cy="20.1" r="2.5" stroke="#b9a691" stroke-width="1.1" fill="none"/>
</svg>
<div class="lb" style="left:489.5px;top:159px">Pictures</div>
<svg style="left:584.5px;top:123px" width="31" height="30" viewBox="0 0 31 30">
<path d="M.5 2 Q.5 .5 2 .5 L11.2 .5 Q12.3 .5 13 1.3 L14.6 3.2 L29 3.2 Q30.5 3.2 30.5 4.7 L30.5 28 Q30.5 29.5 29 29.5 L2 29.5 Q.5 29.5 .5 28Z" fill="#c9b8a5" stroke="#bfae9a" stroke-width="1"/>
<path d="M.5 10.2 L11.2 10.2 Q12.1 10.2 12.7 9.3 L13.8 7.6 Q14.3 6.8 15.2 6.8 L30.5 6.8 L30.5 28 Q30.5 29.5 29 29.5 L2 29.5 Q.5 29.5 .5 28Z" fill="#e1d7cc" stroke="#bfae9a" stroke-width="1"/>
<path d="M1.5 11.2 L11.4 11.2 Q12.6 11.2 13.3 10.2 L14.4 8.5 Q14.8 7.8 15.6 7.8 L29.5 7.8" stroke="#ebe3da" stroke-width=".8" fill="none"/>
<circle cx="18.3" cy="14.2" r="2" stroke="#b9a691" stroke-width="1.1" fill="none"/><circle cx="10.1" cy="18.4" r="2" stroke="#b9a691" stroke-width="1.1" fill="none"/><circle cx="18.3" cy="22.6" r="2" stroke="#b9a691" stroke-width="1.1" fill="none"/><path d="M11.9 17.4 L16.5 15.1 M11.9 19.4 L16.5 21.7" stroke="#b9a691" stroke-width="1"/>
</svg>
<div class="lb" style="left:559.8px;top:159px">Public</div>
<svg style="left:233.0px;top:200px" width="31" height="30" viewBox="0 0 31 30">
<path d="M.5 2 Q.5 .5 2 .5 L11.2 .5 Q12.3 .5 13 1.3 L14.6 3.2 L29 3.2 Q30.5 3.2 30.5 4.7 L30.5 28 Q30.5 29.5 29 29.5 L2 29.5 Q.5 29.5 .5 28Z" fill="#c9b8a5" stroke="#bfae9a" stroke-width="1"/>
<path d="M.5 10.2 L11.2 10.2 Q12.1 10.2 12.7 9.3 L13.8 7.6 Q14.3 6.8 15.2 6.8 L30.5 6.8 L30.5 28 Q30.5 29.5 29 29.5 L2 29.5 Q.5 29.5 .5 28Z" fill="#e1d7cc" stroke="#bfae9a" stroke-width="1"/>
<path d="M1.5 11.2 L11.4 11.2 Q12.6 11.2 13.3 10.2 L14.4 8.5 Q14.8 7.8 15.6 7.8 L29.5 7.8" stroke="#ebe3da" stroke-width=".8" fill="none"/>
<path d="M10.9 14 H16.3 L19.2 16.9 V24.3" stroke="#b9a691" stroke-width="1.2" fill="none" stroke-linejoin="round"/><g fill="#b9a691"><rect x="10.3" y="16.4" width="1.2" height="1.2"/><rect x="10.3" y="19" width="1.2" height="1.2"/><rect x="10.3" y="21.6" width="1.2" height="1.2"/><rect x="10.3" y="23.8" width="1.2" height="1.2"/><rect x="12.9" y="23.8" width="1.2" height="1.2"/><rect x="15.5" y="23.8" width="1.2" height="1.2"/></g>
</svg>
<div class="lb" style="left:208.2px;top:235px">Templates</div>
<svg style="left:303.3px;top:200px" width="31" height="30" viewBox="0 0 31 30">
<path d="M.5 2 Q.5 .5 2 .5 L11.2 .5 Q12.3 .5 13 1.3 L14.6 3.2 L29 3.2 Q30.5 3.2 30.5 4.7 L30.5 28 Q30.5 29.5 29 29.5 L2 29.5 Q.5 29.5 .5 28Z" fill="#c9b8a5" stroke="#bfae9a" stroke-width="1"/>
<path d="M.5 10.2 L11.2 10.2 Q12.1 10.2 12.7 9.3 L13.8 7.6 Q14.3 6.8 15.2 6.8 L30.5 6.8 L30.5 28 Q30.5 29.5 29 29.5 L2 29.5 Q.5 29.5 .5 28Z" fill="#e1d7cc" stroke="#bfae9a" stroke-width="1"/>
<path d="M1.5 11.2 L11.4 11.2 Q12.6 11.2 13.3 10.2 L14.4 8.5 Q14.8 7.8 15.6 7.8 L29.5 7.8" stroke="#ebe3da" stroke-width=".8" fill="none"/>
<path d="M8.4 15.6 L12 18.4 L8.4 21.3Z" stroke="#b9a691" stroke-width="1.1" fill="none" stroke-linejoin="round"/><rect x="12.9" y="14.9" width="8.8" height="7.4" rx="1.6" stroke="#b9a691" stroke-width="1.2" fill="none"/>
</svg>
<div class="lb" style="left:278.6px;top:235px">Videos</div>
<div class="a" style="left:93px;top:413px;width:548px;height:1px;background:#dedbd7"></div>
<div class="a" style="left:640px;top:413px;width:1px;height:27px;background:#fff"></div>
<div class="a" style="left:93px;top:413px;width:1px;height:27px;background:#fff"></div>
<div class="a" style="left:93px;top:439px;width:548px;height:1px;background:#fff"></div>
<div class="tb" style="left:96px;top:415px;width:25px;height:23px;background:#e6e5e2"></div>
<div class="tb" style="left:124px;top:415px;width:25px;height:23px"></div>
<div class="a" style="left:154px;top:416px;width:1px;height:22px;background:#e2dfdb"></div>
<div class="tb" style="left:160px;top:415px;width:25px;height:23px"></div>
<svg style="left:104px;top:423px" width="8" height="7" viewBox="0 0 8 7"><path d="M.3 .2 H3.3 L4 1.2 H7.7 V6.5 H.3Z" fill="#858585"/><path d="M.8 2.2 H7.2" stroke="#e6e5e2" stroke-width=".6"/></svg>
<svg style="left:132px;top:423px" width="8" height="7" viewBox="0 0 8 7"><path d="M1.8 .3 V6.6 M.6 1.2 L1.8 .3" stroke="#7e7e7e" stroke-width="1.1" fill="none"/><path d="M6.8 3 Q5.8 2.4 4.6 3 Q3.6 3.8 3.8 5 Q4.3 6.8 6.8 6" stroke="#8a8a8a" stroke-width="1" fill="none"/></svg>
<svg style="left:168px;top:423px" width="8" height="7" viewBox="0 0 8 7"><rect x=".5" y=".5" width="7" height="6" rx=".6" stroke="#7a7a7a" stroke-width="1" fill="none"/><path d="M4.6 1 V6" stroke="#7a7a7a" stroke-width=".8"/><path d="M3.6 2 L1.6 3.5 L3.6 5Z" fill="#7a7a7a"/></svg>
<div class="t" style="left:317.3px;top:423px;font-size:8.8px;color:#999999;">8 items, Free space: 975.7 MB</div>
<div class="a" style="left:577px;top:424.5px;width:53px;height:3.5px;background:#e2dfdb;border-radius:2px;border:1px solid #d6d3ce"></div>
<div class="a" style="left:577px;top:424.5px;width:14px;height:3.5px;background:#3584e4;border-radius:2px"></div>
<div class="a" style="left:587.8px;top:419.6px;width:13.6px;height:13.6px;background:#f7f6f4;border:1px solid #cdcac5;border-radius:50%"></div>
<div class="a" style="left:112px;top:487px;width:475px;height:38px;background:linear-gradient(#383838,#323232);border-top:1px solid #4a4a4a;border-left:1px solid #454545;border-right:1px solid #454545"></div>
<svg style="left:118px;top:488px" width="36" height="36" viewBox="0 0 36 36"><circle cx="18.9" cy="17.8" r="15.1" fill="#5f98f0"/>
<path d="M18.90 11.00 L32.38 11.00 A15.1 15.1 0 0 0 6.27 9.52 L13.01 21.20Z" fill="#3d6fd6"/>
<path d="M18.90 11.00 L32.38 11.00 A15.1 15.1 0 0 1 18.05 32.88 L24.79 21.20Z" fill="#92b6f6"/>
<path d="M24.79 21.20 L18.05 32.88 A15.1 15.1 0 0 1 6.27 9.52 L13.01 21.20Z" fill="#5f98f0"/>
<circle cx="18.9" cy="17.8" r="6.8" fill="#fff"/><circle cx="18.9" cy="17.8" r="5.3" fill="#4a88ee"/></svg>
<svg style="left:156px;top:488px" width="36" height="36" viewBox="0 0 36 36"><path d="M3.8 13.7 L16 2.7 L28.8 13.7 V31.9 H3.8Z" fill="#d4d4d0"/>
<rect x="6.2" y="5.1" width="20.2" height="14" fill="#f2f2f0" stroke="#d0d0cc" stroke-width=".5"/>
<path d="M3.8 13.7 L16 24 L28.8 13.7 V31.9 H3.8Z" fill="#e8e8e4"/>
<path d="M3.8 31.9 L13 22 M28.8 31.9 L19.5 22" stroke="#c4c4c0" stroke-width=".9"/>
<path d="M3.8 13.7 L3.8 31.9 L14 23Z" fill="#d8d8d4"/>
<circle cx="23.7" cy="25.4" r="7" fill="#fff" stroke="#9636b0" stroke-width="1.8"/>
<path d="M20.3 21.6 L23.7 25.4 L26.8 21.8" stroke="#222" stroke-width="1" fill="none"/><path d="M23.7 25.4 L22.6 29.8" stroke="#e05050" stroke-width=".7"/><circle cx="23.7" cy="25.4" r=".9" fill="#111"/></svg>
<svg style="left:191px;top:488px" width="36" height="36" viewBox="0 0 36 36"><rect x="10.5" y="11.5" width="21" height="16" rx="1.5" fill="#f4f4f4"/>
<path d="M25 27 L28 31.5 L28.5 27Z" fill="#f4f4f4"/>
<rect x="2.2" y="5" width="21" height="17" rx="1.5" fill="#4ccf82"/>
<path d="M5.5 21.5 L6 26 L10 21.5Z" fill="#4ccf82"/>
<path d="M11.2 8.6 L10.2 17.6 M15 8.6 L14 17.6 M8.5 11.4 H17.4 M8.1 14.8 H17" stroke="#fff" stroke-width="1.5"/></svg>
<svg style="left:226px;top:488px" width="36" height="36" viewBox="0 0 36 36"><path d="M13 14 Q8 14 5 16 L3.1 19.5 Q3.5 21.5 8.6 21.5 V31.2 H26.4 V21.5 Q31.5 21.5 31.9 19.5 L30 16 Q27 14 22 14Z" fill="#62b82a" stroke="#4a9a1a" stroke-width=".6"/>
<path d="M8.6 21.5 V23 M26.4 21.5 V23" stroke="#8ad84a" stroke-width=".8"/>
<path d="M14 13.5 H21 L19.5 17 H15.5Z" fill="#5a8ad8"/>
<circle cx="17.5" cy="8.6" r="6.9" fill="#f0d21c" stroke="#d0a800" stroke-width=".5"/>
<ellipse cx="15.5" cy="6.5" rx="3" ry="2.2" fill="#fff8a8" opacity=".7"/></svg>
<svg style="left:261px;top:488px" width="36" height="36" viewBox="0 0 36 36"><path d="M5.5 2.7 H19.6 L30.2 13.3 V33 H5.5Z" fill="#fff" stroke="#1a86d0" stroke-width="2" stroke-linejoin="round"/>
<path d="M23.3 2 H31.2 V9.3Z" fill="#1a86d0"/>
<g fill="#1a76c0"><rect x="10" y="13.7" width="5" height="1.3"/><rect x="10" y="16.3" width="5" height="1.3"/><rect x="10" y="19.2" width="5" height="1.3"/>
<rect x="10" y="22" width="16" height="1.3"/><rect x="10" y="24.8" width="16" height="1.3"/><rect x="10" y="27.5" width="12" height="1.3"/></g>
<rect x="17.3" y="13.6" width="8.6" height="6.6" fill="#d8ecf8" stroke="#1a76c0" stroke-width=".9"/>
<path d="M17.8 19.8 L20 16 L21.5 18 L23 15.5 L25.5 19.8Z" fill="#1a76c0"/></svg>
<svg style="left:296px;top:488px" width="36" height="36" viewBox="0 0 36 36"><path d="M6.1 2.7 H19.9 L30.9 13.3 V32.6 H6.1Z" fill="#fff" stroke="#2aa83c" stroke-width="2" stroke-linejoin="round"/>
<path d="M24 2 H31.9 V9.3Z" fill="#2aa83c"/>
<g stroke="#2aa83c" stroke-width=".9" fill="none"><rect x="10.5" y="14.5" width="15" height="13.5"/><path d="M10.5 17.2 H25.5 M10.5 19.9 H25.5 M10.5 22.6 H25.5 M10.5 25.3 H25.5 M15.5 14.5 V28 M20.5 14.5 V28"/></g>
<rect x="19.5" y="22" width="7.5" height="7.5" fill="#fff" stroke="#2aa83c" stroke-width="1"/><path d="M21.5 28 V25 M23.3 28 V23.5 M25 28 V26" stroke="#2aa83c" stroke-width="1"/></svg>
<svg style="left:333px;top:488px" width="36" height="36" viewBox="0 0 36 36"><rect x="6.5" y="3.1" width="20.9" height="29.1" rx="2" fill="#e2e2de" stroke="#b8b8b4" stroke-width=".6"/>
<rect x="9.5" y="6.2" width="15.2" height="4.4" rx=".8" fill="#6ab37e"/>
<g fill="#a4a4a0"><circle cx="11" cy="14.6" r="1.9"/><circle cx="16.8" cy="14.6" r="1.9"/><circle cx="22.9" cy="14.6" r="1.9"/></g>
<g fill="#54546a"><circle cx="11" cy="20.3" r="1.9"/><circle cx="16.8" cy="20.3" r="1.9"/><circle cx="11" cy="25.8" r="1.9"/><circle cx="16.8" cy="25.8" r="1.9"/></g>
<rect x="21" y="18.7" width="3.7" height="9.2" rx="1.8" fill="#f26a10"/></svg>
<svg style="left:366px;top:488px" width="36" height="36" viewBox="0 0 36 36"><path d="M9.5 9 Q13 6 17 8.5 Q23 7 28.8 5 Q30 12 27.5 18 Q24.5 23.5 18 23.5 Q11.5 23.5 9 19.5Z" fill="#77705e"/>
<path d="M11 9 Q13 7.5 16 9" stroke="#99927e" stroke-width=".8" fill="none"/>
<circle cx="6.5" cy="16.1" r="3.9" fill="#1a1a1a"/><circle cx="5.4" cy="14.8" r="1.1" fill="#ddd"/>
<circle cx="12.3" cy="14" r="2.6" fill="#f2f2f2" stroke="#555" stroke-width=".4"/><circle cx="13" cy="14.3" r="1.1" fill="#111"/>
<circle cx="18.2" cy="13.4" r="3.1" fill="#f6f6f6" stroke="#555" stroke-width=".4"/><circle cx="18.8" cy="13.9" r="1.3" fill="#111"/>
<path d="M21.3 19.2 L27 22.2" stroke="#e88a1a" stroke-width="1.9"/><path d="M27 22.2 L29.5 23.5" stroke="#ddd" stroke-width="1.9"/>
<path d="M29.5 23.5 Q33.5 25.5 34.6 29.8 Q30.5 28 29 24.5Z" fill="#111"/></svg>
<svg style="left:403px;top:488px" width="36" height="36" viewBox="0 0 36 36"><rect x="4.8" y="4.1" width="26.7" height="26.8" rx="1.2" fill="#f2f2f0"/>
<defs><linearGradient id="pg" x1="0" y1="0" x2="1" y2="1"><stop offset="0" stop-color="#e82a50"/><stop offset=".5" stop-color="#a838c8"/><stop offset="1" stop-color="#3a6ae8"/></linearGradient></defs>
<rect x="6.9" y="6.2" width="22.6" height="17.1" fill="url(#pg)"/>
<rect x="4.8" y="11.6" width="11.5" height="12" rx="1" fill="#e6e6e2"/>
<circle cx="10" cy="18.5" r="6.8" fill="#d84a88" stroke="#e8ece8" stroke-width="1.2"/>
<circle cx="9" cy="16.5" r="3" fill="#e878a8" opacity=".5"/></svg>
<svg style="left:439px;top:488px" width="36" height="36" viewBox="0 0 36 36"><rect x="6.2" y="3.1" width="23.3" height="28.8" rx="1.5" fill="#e4e4e0"/>
<rect x="6.2" y="26.7" width="23.3" height="5.2" rx="1" fill="#b4b4b0"/>
<circle cx="17.5" cy="15.1" r="8.4" fill="#2a2a3a"/><circle cx="17.5" cy="15.1" r="6" fill="#f2de2a"/><circle cx="17.5" cy="15.1" r="2.6" fill="#2a2a3a"/></svg>
<svg style="left:476px;top:488px" width="36" height="36" viewBox="0 0 36 36"><defs><clipPath id="prc"><path d="M6.5 6 Q4.5 4 8 4.2 L28 15.5 Q30.5 18 28 20.5 L8 31.8 Q4.5 32.5 4.5 29Z"/></clipPath></defs>
<g clip-path="url(#prc)">
<rect x="0" y="0" width="36" height="36" fill="#b068d0"/>
<rect x="0" y="12" width="13" height="10" fill="#c878d8"/>
<path d="M0 22 L13 22 L13 36 L0 36Z" fill="#f0d838"/>
<path d="M13 8 L32 12 L32 36 L13 36Z" fill="#3a8ee8"/>
<path d="M13 16 L24 16 L24 36 L13 36Z" fill="#52b8d0"/>
<rect x="21" y="14" width="12" height="22" rx="6" fill="#3ed0b4"/>
</g></svg>
<svg style="left:511px;top:488px" width="36" height="36" viewBox="0 0 36 36"><rect x="5.5" y="3.4" width="22.6" height="28.5" rx="1.2" fill="#f6f6f4"/>
<path d="M5.5 31.4 H28.1" stroke="#3a7ad0" stroke-width="1"/>
<path d="M7.5 6.4 H26" stroke="#c8c8c8" stroke-width=".8" stroke-dasharray="1 1.2"/>
<path d="M9 27.4 L27.5 8.2 L32.3 12.8 L13.8 32Z" fill="#f2c81a"/>
<path d="M27.5 8.2 L32.3 12.8 L29.8 15.3 L25 10.7Z" fill="#e8a818"/>
<path d="M11.4 25 L16.2 29.6" stroke="#f8e070" stroke-width="1"/>
<path d="M9 27.4 L7.8 31 L11.5 29.8Z" fill="#222"/></svg>
<svg style="left:547px;top:488px" width="36" height="36" viewBox="0 0 36 36"><rect x="3.2" y="4" width="26.8" height="27.8" rx="2.2" fill="#d4d4d0"/>
<rect x="4.5" y="5.3" width="24.2" height="21.5" rx="1" fill="#262230"/>
<path d="M7 8.3 L10.8 10.5 L7 12.7" stroke="#fff" stroke-width="1.3" fill="none"/><path d="M11.5 13.8 H15.5" stroke="#fff" stroke-width="1.4"/></svg>
</body></html>
